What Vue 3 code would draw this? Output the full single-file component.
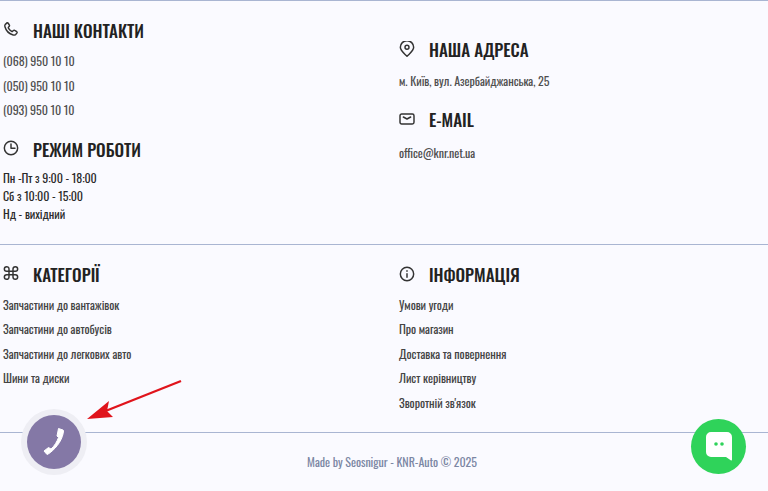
<script setup>
const phones = ['(068) 950 10 10', '(050) 950 10 10', '(093) 950 10 10']
const hours = ['Пн -Пт з 9:00 - 18:00', 'Сб з 10:00 - 15:00', 'Нд - вихідний']
const cats = ['Запчастини до вантажівок', 'Запчастини до автобусів', 'Запчастини до легкових авто', 'Шини та диски']
const info = ['Умови угоди', 'Про магазин', 'Доставка та повернення', 'Лист керівництву', 'Зворотній зв\'язок']
</script>

<template>
  <div class="page">
    <section class="row top">
      <div class="col left">
        <h3 class="head">
          <svg class="ic" viewBox="0 0 24 24"><path d="M6.500 2.500 3.500 5c-1 1-1 2.300-.6 3.700C4.500 14.500 9.500 19.500 15.300 21c1.400.4 2.700.2 3.700-.8l1.800-2c.6-.7.5-1.600-.2-2.100l-3-2c-.7-.5-1.500-.4-2.100.2l-1 1c-.4.4-1 .5-1.500.2-2-1.200-3.700-2.900-4.900-4.900-.3-.5-.2-1.100.2-1.500l1-1c.6-.6.7-1.400.2-2.100l-2-3c-.4-.7-1.800-.5-1.500-.5z"/></svg>
          НАШІ КОНТАКТИ
        </h3>
        <ul class="list muted"><li v-for="p in phones" :key="p">{{ p }}</li></ul>
        <h3 class="head hours-head">
          <svg class="ic" viewBox="0 0 24 24"><circle cx="12" cy="12" r="10"/><path d="M12 6v6.500H18"/></svg>
          РЕЖИМ РОБОТИ
        </h3>
        <ul class="hours"><li v-for="h in hours" :key="h">{{ h }}</li></ul>
      </div>
      <div class="col right">
        <h3 class="head">
          <svg class="ic" viewBox="0 0 24 24"><path d="M12 23c-5-5-10-8.500-10-13.500a10 10 0 0 1 20 0c0 5-5 8.500-10 13.500z"/><circle cx="12" cy="9.500" r="3"/></svg>
          НАША АДРЕСА
        </h3>
        <p class="line muted">м. Київ, вул. Азербайджанська, 25</p>
        <h3 class="head mail-head">
          <svg class="ic" viewBox="0 0 24 24"><rect x="1.500" y="4.500" width="21" height="15" rx="2.500"/><path d="M6.500 9l5.500 3 5.500-3"/></svg>
          E-MAIL
        </h3>
        <p class="line muted mail">office@knr.net.ua</p>
      </div>
    </section>

    <section class="row mid">
      <div class="col left">
        <h3 class="head">
          <svg class="ic" viewBox="0 0 24 24"><path d="M9 9V6a3.500 3.500 0 1 0-3.500 3.500H18.500A3.500 3.500 0 1 0 15 6v12a3.500 3.500 0 1 0 3.500-3.500H5.500A3.500 3.500 0 1 0 9 18z"/></svg>
          КАТЕГОРІЇ
        </h3>
        <ul class="list links"><li v-for="c in cats" :key="c">{{ c }}</li></ul>
      </div>
      <div class="col right">
        <h3 class="head">
          <svg class="ic" viewBox="0 0 24 24"><circle cx="12" cy="12" r="10"/><path d="M12 11.500v5.500M12 7v1"/></svg>
          ІНФОРМАЦІЯ
        </h3>
        <ul class="list links"><li v-for="i in info" :key="i">{{ i }}</li></ul>
      </div>
    </section>

    <footer class="copy">Made by Seosnigur - KNR-Auto © 2025</footer>

    <svg class="arrow" width="110" height="50" viewBox="0 0 110 50">
      <path d="M96 2 18 33" stroke="#e0141c" stroke-width="2.400" fill="none"/>
      <path d="M2 40 24 22l-2 10 6 6z" fill="#e0141c"/>
    </svg>

    <div class="call">
      <div class="call-inner">
        <svg width="30" height="30" viewBox="0 0 30 30"><path d="M19.500 1.500 24 3c.5.200.5.500.5 1C24 11 19 20 10 26.500L8 27.500 5 24l4.500-3.500L12 22c3.500-3 6-7.500 7.500-11.500L18 9z" fill="#fff" stroke="#fff" stroke-linejoin="round"/></svg>
      </div>
    </div>

    <div class="chat">
      <svg width="26" height="29" viewBox="0 0 26 29"><path d="M5 0h16a5 5 0 0 1 5 5v22.500c0 1-.7 1.200-1.300.7L20 25H5a5 5 0 0 1-5-5V5a5 5 0 0 1 5-5z" fill="#fff"/><circle cx="10" cy="12" r="1.800" fill="#2fd35a"/><circle cx="16" cy="12" r="1.800" fill="#2fd35a"/></svg>
    </div>
  </div>
</template>

<style>
html, body { margin: 0; background: #fafaff; overflow: hidden; }
</style>

<style scoped>
.page {
  position: relative;
  width: 768px;
  height: 491px;
  overflow: hidden;
  background: #fafaff;
  font-family: "Oswald", "Liberation Sans", sans-serif;
  color: #2d2d2d;
}
.row {
  display: grid;
  grid-template-columns: 396px 1fr;
  box-sizing: border-box;
  padding-left: 3px;
}
.top { height: 245px; border-top: 1px solid #a9b5d2; border-bottom: 1px solid #a9b5d2; padding-top: 18px; }
.mid { height: 188px; border-bottom: 1px solid #a9b5d2; padding-top: 18px; }
.top .col.right { padding-top: 19px; }
.head {
  display: flex;
  align-items: center;
  margin: 0;
  height: 22px;
  font-size: 17px;
  font-weight: 500;
  color: #222;
}
.ic {
  width: 16px;
  height: 16px;
  margin-right: 14px;
  margin-bottom: 2px;
  fill: none;
  stroke: #333;
  stroke-width: 2.200;
  stroke-linecap: round;
  stroke-linejoin: round;
  flex: none;
}
.right .ic { margin-bottom: 0; }
ul { list-style: none; margin: 0; padding: 0; }
.list { margin-top: 8px; }
.mid .list { margin-top: 7.500px; }
.list li { height: 24.500px; line-height: 24.500px; font-size: 12px; letter-spacing: -.06px; }
.muted { color: #4f4f4f; }
.links li { color: #444; }
.hours-head { margin-top: 15.500px; }
.hours { margin-top: 9px; }
.hours li { height: 18px; line-height: 18px; font-size: 12px; letter-spacing: -.06px; color: #2a2a2a; }
.line { margin: 11px 0 0; font-size: 12px; line-height: 20px; letter-spacing: -.06px; }
.mail-head { margin-top: 17px; }
.mail { margin-top: 13px; }
.copy {
  text-align: center;
  font-size: 12px;
  line-height: 20px;
  letter-spacing: -.06px;
  margin-top: 19px;
  padding-left: 16px;
  color: #7b86a3;
}
.arrow { position: absolute; left: 85px; top: 379px; }
.call {
  position: absolute;
  left: 21px;
  top: 409px;
  width: 66px;
  height: 66px;
  border-radius: 50%;
  background: #eeeef4;
  display: flex;
  align-items: center;
  justify-content: center;
}
.call-inner {
  width: 54px;
  height: 54px;
  border-radius: 50%;
  background: #8478a6;
  display: flex;
  align-items: center;
  justify-content: center;
}
.chat {
  position: absolute;
  left: 691px;
  top: 419px;
  width: 55px;
  height: 55px;
  border-radius: 50%;
  background: #2fd35a;
  display: flex;
  align-items: center;
  justify-content: center;
}
</style>
